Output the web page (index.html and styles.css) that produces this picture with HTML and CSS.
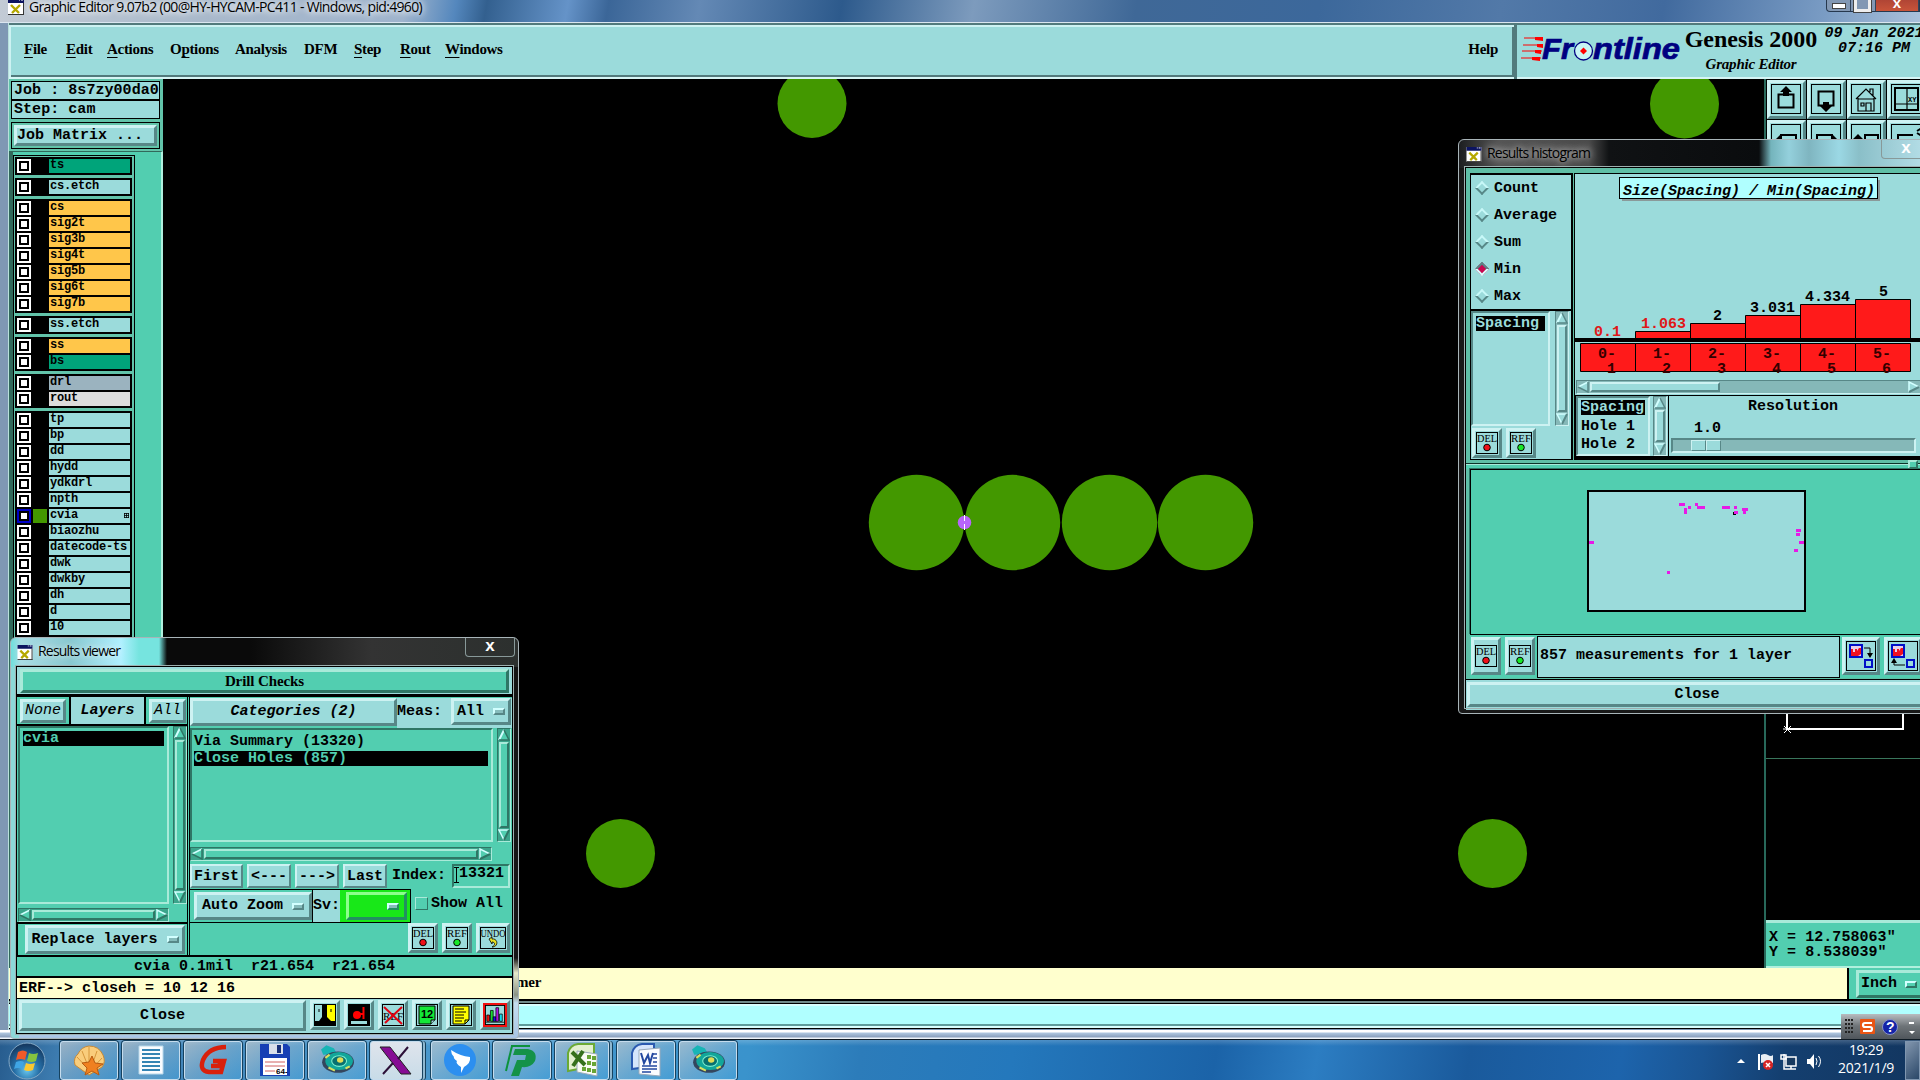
FILE: index.html
```
<!DOCTYPE html>
<html lang="en">
<head>
  <meta charset="UTF-8">
  <title>Graphic Editor 9.07b2</title>
  <link rel="stylesheet" href="styles.css">
</head>
<body>
  <svg class="defs">
    <symbol id="xicon" viewBox="0 0 16 16"><rect width="16" height="16" fill="#fff"/><rect width="16" height="4" fill="#0c1460"/><path d="M11 1h1M13 1h2" stroke="#fff"/><path d="M3 6l8 8M12 6l-8 8" stroke="#b5a800" stroke-width="2.4"/><path d="M15.500 4V16M0 15.500H16" stroke="#333"/></symbol>
    <symbol id="up" viewBox="0 0 12 12"><path d="M6 1L1 11H11Z" fill="var(--face)"/><path d="M6 1L1 11" stroke="#d2ffff" stroke-width="2"/><path d="M6 1L11 11H1" fill="none" stroke="var(--lo)" stroke-width="1.500"/></symbol>
    <symbol id="down" viewBox="0 0 12 12"><path d="M1 1H11L6 11Z" fill="var(--face)"/><path d="M11 1H1L6 11" fill="none" stroke="#d2ffff" stroke-width="1.500"/><path d="M11 1L6 11" stroke="var(--lo)" stroke-width="2"/></symbol>
    <symbol id="left" viewBox="0 0 12 12"><path d="M1 6L11 1V11Z" fill="var(--face)"/><path d="M11 1L1 6" stroke="#d2ffff" stroke-width="1.500"/><path d="M11 1V11L1 6" fill="none" stroke="var(--lo)" stroke-width="1.500"/></symbol>
    <symbol id="right" viewBox="0 0 12 12"><path d="M11 6L1 1V11Z" fill="var(--face)"/><path d="M11 6L1 1V11" fill="none" stroke="#d2ffff" stroke-width="1.500"/><path d="M1 11L11 6" stroke="var(--lo)" stroke-width="2"/></symbol>
    <symbol id="del" viewBox="0 0 22 22"><rect x=".5" y=".5" width="21" height="21" fill="none" stroke="#000"/><text x="11" y="10" class="tiny" textLength="20" lengthAdjust="spacingAndGlyphs">DEL</text><circle cx="11" cy="15.500" r="3.300" fill="#f01018" stroke="#000"/></symbol>
    <symbol id="ref" viewBox="0 0 22 22"><rect x=".5" y=".5" width="21" height="21" fill="none" stroke="#000"/><text x="11" y="10" class="tiny" textLength="20" lengthAdjust="spacingAndGlyphs">REF</text><circle cx="11" cy="15.500" r="3.300" fill="#18e828" stroke="#000"/></symbol>
    <symbol id="snail" viewBox="0 0 32 30"><path d="M1 5l5-4 7 3 3 5-13 1z" fill="#18b5b5"/><ellipse cx="17" cy="17" rx="15" ry="10" fill="#34465e"/><ellipse cx="18" cy="16" rx="13" ry="8.500" fill="#12a69a"/><ellipse cx="18" cy="16" rx="7" ry="5" fill="#087070" stroke="#80f0d0"/><ellipse cx="19" cy="15" rx="3" ry="2.500" fill="#e3dc54"/><path d="M8 22l6 3M5 13l4-3M24 23l4-2" stroke="#d8e060" stroke-width="2"/></symbol>
  </svg>

  <div class="titlebar">
    <svg class="app-icon"><use href="#xicon"/></svg>
    <span class="caption">Graphic Editor 9.07b2 (00@HY-HYCAM-PC411 - Windows, pid:4960)</span>
    <div class="win-buttons"><i class="min"></i><i class="max"></i><i class="cls">x</i></div>
  </div>

  <div class="editor">
    <header class="topbar">
      <nav class="menubar">
        <span class="m1"><u>F</u>ile</span><span class="m2"><u>E</u>dit</span><span class="m3"><u>A</u>ctions</span><span class="m4">O<u>p</u>tions</span><span class="m5">Analysis</span><span class="m6">DFM</span><span class="m7"><u>S</u>tep</span><span class="m8"><u>R</u>out</span><span class="m9"><u>W</u>indows</span>
        <span class="help">Help</span>
      </nav>
      <div class="brand">
        <svg class="logo" width="162" height="50" viewBox="0 0 162 50">
          <path d="M14 12L22 12V16L14 15ZM16 19h6v4l-6-1ZM14 25h6v4l-6-1ZM11 32h8v4l-8-1Z" fill="#f00"/>
          <path d="M3 13h18M2 20h20M1 26h20M0 33h20" stroke="#f00" stroke-width="1"/>
          <g class="logo-text"><text x="21" y="34" textLength="31" lengthAdjust="spacingAndGlyphs">Fr</text><text x="72" y="34" textLength="87" lengthAdjust="spacingAndGlyphs">ntline</text></g>
          <circle cx="62.500" cy="26" r="9" fill="#c8f4f4" stroke="#000080" stroke-width="1.300"/>
          <path d="M62.500 22.500L66 26L62.500 29.500L59 26Z" fill="#f00"/>
        </svg>
        <div class="product"><b>Genesis 2000</b><em>Graphic Editor</em></div>
        <div class="clock">09 Jan 2021<br>07:16 PM</div>
      </div>
    </header>

    <main class="work">
      <aside class="side">
        <div class="job">Job : 8s7zy00da0</div>
        <div class="job">Step: cam</div>
        <div class="matrix"><div class="btn">Job Matrix ...</div></div>
        <div class="layer-area">
          <div class="layers">
            <div class="group"><div class="row"><i></i><s></s><b class="mask">ts</b></div></div>
            <div class="group"><div class="row"><i></i><s></s><b>cs.etch</b></div></div>
            <div class="group">
              <div class="row"><i></i><s></s><b class="sig">cs</b></div>
              <div class="row"><i></i><s></s><b class="sig">sig2t</b></div>
              <div class="row"><i></i><s></s><b class="sig">sig3b</b></div>
              <div class="row"><i></i><s></s><b class="sig">sig4t</b></div>
              <div class="row"><i></i><s></s><b class="sig">sig5b</b></div>
              <div class="row"><i></i><s></s><b class="sig">sig6t</b></div>
              <div class="row"><i></i><s></s><b class="sig">sig7b</b></div>
            </div>
            <div class="group"><div class="row"><i></i><s></s><b>ss.etch</b></div></div>
            <div class="group">
              <div class="row"><i></i><s></s><b class="sig">ss</b></div>
              <div class="row"><i></i><s></s><b class="mask">bs</b></div>
            </div>
            <div class="group">
              <div class="row"><i></i><s></s><b class="drl">drl</b></div>
              <div class="row"><i></i><s></s><b class="rout">rout</b></div>
            </div>
            <div class="group">
              <div class="row"><i></i><s></s><b>tp</b></div>
              <div class="row"><i></i><s></s><b>bp</b></div>
              <div class="row"><i></i><s></s><b>dd</b></div>
              <div class="row"><i></i><s></s><b>hydd</b></div>
              <div class="row"><i></i><s></s><b>ydkdrl</b></div>
              <div class="row"><i></i><s></s><b>npth</b></div>
              <div class="row on"><i></i><s></s><b>cvia<svg width="5" height="5"><path d="M0 .5h5M0 2.500h5M0 4.500h5M.5 0v5M2.500 0v5M4.500 0v5" stroke="#000" stroke-width=".8"/></svg></b></div>
              <div class="row"><i></i><s></s><b>biaozhu</b></div>
              <div class="row"><i></i><s></s><b>datecode-ts</b></div>
              <div class="row"><i></i><s></s><b>dwk</b></div>
              <div class="row"><i></i><s></s><b>dwkby</b></div>
              <div class="row"><i></i><s></s><b>dh</b></div>
              <div class="row"><i></i><s></s><b>d</b></div>
              <div class="row"><i></i><s></s><b>10</b></div>
            </div>
          </div>
        </div>
      </aside>

      <svg class="canvas" width="1601" height="889" viewBox="163 79 1601 889">
        <g fill="#439800">
          <circle cx="812" cy="103.500" r="34.500"/><circle cx="1684.500" cy="104" r="34.500"/>
          <circle cx="620.500" cy="853.500" r="34.500"/><circle cx="1492.500" cy="853.500" r="34.500"/>
          <circle cx="916.500" cy="522.500" r="47.700"/><circle cx="1012.500" cy="522.500" r="47.700"/>
          <circle cx="1109.500" cy="522.500" r="47.700"/><circle cx="1205.500" cy="522.500" r="47.700"/>
        </g>
        <circle cx="964.500" cy="522.500" r="6.800" fill="#b864fa"/>
        <path d="M964.500 515v6M964.500 524v6" stroke="#fff"/>
      </svg>

      <aside class="right">
        <div class="tools">
          <div class="tool"><svg width="30" height="30"><rect x="7.500" y="10.500" width="15" height="13" class="t2"/><path d="M15 2l6 6h-3v4h-6v-4h-3z"/></svg></div>
          <div class="tool"><svg width="30" height="30"><rect x="7.500" y="7.500" width="15" height="14" class="t2"/><path d="M15 28l-6-6h3v-4h6v4h3z"/></svg></div>
          <div class="tool"><svg width="30" height="30"><path d="M5 15L15 5L25 15M19 8V5h3v7M7 14V27H23V14M7 15H23M15 27V19h5v8M10 19h3v3h-3z" class="t1"/></svg></div>
          <div class="tool"><svg width="30" height="30"><path d="M4 4H27V26H4Z" class="t2"/><path d="M16 4V26M4 20H27" class="t1"/><text x="17" y="18" class="xy">XY</text></svg></div>
          <div class="tool"><svg width="30" height="30"><rect x="10" y="11" width="15" height="14" class="t2"/><path d="M4 16l6-6v12z"/></svg></div>
          <div class="tool"><svg width="30" height="30"><rect x="6" y="11" width="15" height="14" class="t2"/><path d="M27 16l-6-6v12z"/></svg></div>
          <div class="tool"><svg width="30" height="30"><rect x="14" y="11" width="13" height="14" class="t2"/><path d="M2 15l5-5 5 5zM5 15h4v4h-4z"/></svg></div>
          <div class="tool"><svg width="30" height="30"><path d="M7 22V11H22M26 7l5-3M26 9l5 3" class="t2"/></svg></div>
        </div>
        <svg class="overview" width="154" height="63"><path d="M21 13V33H137V13" fill="none" stroke="#fff" stroke-width="2"/><path d="M18 30l7 7M25 30l-7 7M17 33h8" stroke="#fff"/></svg>
        <div class="xy-pos">X = 12.758063"<br>Y = 8.538039"</div>
      </aside>
    </main>

    <div class="msgbar"><span>Select layer by cursor. Click on marker. Timer</span><div class="units"><div class="btn">Inch<i class="opt"></i></div></div></div>
    <div class="cmdbar"></div>
  </div>
  <div class="frame-bottom"></div>

  <section class="window viewer">
    <div class="win-title"><svg class="app-icon"><use href="#xicon"/></svg><span>Results viewer</span><i class="close">x</i></div>
    <div class="win-body">
      <div class="drill"><div class="btn">Drill Checks</div></div>
      <div class="panes">
        <div class="pane-l">
          <div class="tabs"><div class="btn thin">None</div><em>Layers</em><div class="btn thin all">All</div></div>
          <div class="list-row">
            <div class="list"><div class="sel">cvia</div></div>
            <div class="sb v"><svg><use href="#up"/></svg><i></i><svg><use href="#down"/></svg></div>
          </div>
          <div class="sb h"><svg><use href="#left"/></svg><i></i><svg><use href="#right"/></svg></div>
          <div class="replace"><div class="btn">Replace layers<i class="opt"></i></div></div>
        </div>
        <div class="pane-r">
          <div class="cats"><div class="btn cat">Categories (2)</div><div class="meas">Meas:<div class="btn">All<i class="opt"></i></div></div></div>
          <div class="list-row">
            <div class="list"><div>Via Summary (13320)</div><div class="sel">Close Holes (857)</div></div>
            <div class="sb v"><svg><use href="#up"/></svg><i></i><svg><use href="#down"/></svg></div>
          </div>
          <div class="sb h"><svg><use href="#left"/></svg><i></i><svg><use href="#right"/></svg></div>
          <div class="nav"><div class="btn first">First</div><div class="btn">&lt;---</div><div class="btn">---&gt;</div><div class="btn">Last</div><span>Index:</span><div class="field"><svg width="5" height="16"><path d="M0 .5h5M2.500 1v14M0 15.500h5" stroke="#000"/></svg>13321</div></div>
          <div class="zoom"><div class="zoom-box"><div class="btn">Auto Zoom<i class="opt"></i></div><span>Sv:</span><div class="green"><div class="btn"><i class="opt"></i></div></div></div><i class="check"></i>Show All</div>
          <div class="acts">
            <div class="ib"><svg><use href="#del"/></svg></div><div class="ib"><svg><use href="#ref"/></svg></div>
            <div class="ib wide"><svg viewBox="0 0 26 22"><rect x=".5" y=".5" width="25" height="21" fill="none" stroke="#000"/><text x="13" y="10" class="tiny" textLength="25" lengthAdjust="spacingAndGlyphs">UNDO</text><path d="M9 12l3-2v2c6-1 7 8 0 8c4-2 3-5 0-5v2z" fill="#e8e020" stroke="#000" stroke-width=".8"/></svg></div>
          </div>
        </div>
      </div>
      <div class="measure">cvia 0.1mil&nbsp; r21.654&nbsp; r21.654</div>
      <div class="erf">ERF--&gt; closeh = 10 12 16</div>
      <div class="foot">
        <div class="btn">Close</div>
        <div class="ib"><svg viewBox="0 0 22 22"><path d="M0 0h22v22H0z"/><path d="M1 1h7v12l-3 4H1z" fill="#9cdcdc"/><path d="M13 1h8v16h-4l-4-4z" fill="#ff0"/><path d="M5 5v3M17 5v3" stroke="#000"/></svg></div>
        <div class="ib"><svg viewBox="0 0 22 22"><path d="M0 0h22v22H0z"/><path d="M3 17h16v3H3z" fill="#9cdcdc"/><circle cx="9" cy="11" r="4" fill="#f00"/><path d="M15.500 3v12M11 10h5" stroke="#f00" stroke-width="2"/></svg></div>
        <div class="ib"><svg viewBox="0 0 22 22"><rect x=".5" y=".5" width="21" height="21" fill="none" stroke="#000"/><text x="11" y="16" class="tiny">REF</text><path d="M2 3L20 20M20 3L3 19" stroke="#e00010" stroke-width="2"/></svg></div>
        <div class="ib"><svg viewBox="0 0 22 22"><rect x=".5" y=".5" width="21" height="21" fill="none" stroke="#000"/><path d="M3 2H19V16L15 20H3Z" fill="#14e838" stroke="#000"/><path d="M19 16h-4v4" fill="#9cdcdc" stroke="#000"/><text x="11" y="14" class="tiny num">12</text></svg></div>
        <div class="ib"><svg viewBox="0 0 22 22"><rect x=".5" y=".5" width="21" height="21" fill="none" stroke="#000"/><path d="M3 2H19V16L15 20H3Z" fill="#ff0" stroke="#000"/><path d="M5 5h9M5 8h11M5 11h9M5 14h9M5 17h7M19 16h-4v4" fill="none" stroke="#000"/></svg></div>
        <div class="ib hot"><svg viewBox="0 0 22 22"><rect x=".5" y=".5" width="21" height="21" fill="none" stroke="#000"/><g stroke="#000" stroke-width=".8"><path d="M2 11h3v7H2z" fill="#f01010"/><path d="M6 6h3v12H6z" fill="#18d830"/><path d="M9 13h3v5H9z" fill="#1010f0"/><path d="M12 3h3v15h-3z" fill="#b010e0"/><path d="M16 10h3v8h-3z" fill="#10e0f0"/><path d="M1 19h20"/></g></svg></div>
      </div>
    </div>
  </section>

  <section class="window histogram">
    <div class="win-title"><svg class="app-icon"><use href="#xicon"/></svg><span>Results histogram</span><i class="close">x</i></div>
    <div class="win-body">
      <div class="hist-top">
        <div class="hist-l">
          <div class="radios">
            <div><i></i>Count</div><div><i></i>Average</div><div><i></i>Sum</div><div><i class="on"></i>Min</div><div><i></i>Max</div>
          </div>
          <div class="cols">
            <div class="list-row">
              <div class="list"><div class="sel">Spacing</div></div>
              <div class="sb v"><svg><use href="#up"/></svg><i></i><svg><use href="#down"/></svg></div>
            </div>
            <div class="acts"><div class="ib"><svg><use href="#del"/></svg></div><div class="ib"><svg><use href="#ref"/></svg></div></div>
          </div>
        </div>
        <div class="hist-r">
          <svg class="chart" width="350" height="206" viewBox="1574 173 350 206">
            <rect x="1622" y="180" width="258" height="21" fill="#8a9a9a"/>
            <rect x="1619.500" y="177.500" width="258" height="21" fill="#b0ffff" stroke="#000"/>
            <text x="1623" y="195" class="it">Size(Spacing) / Min(Spacing)</text>
            <g fill="#ff1a1a" stroke="#000">
              <path d="M1635.500 331.500h55v8h-55zM1690.500 323.500h55v16h-55zM1745.500 315.500h55v24h-55zM1800.500 304.500h55v35h-55zM1855.500 299.500h55v40h-55z"/>
              <path d="M1580.500 343.500h55v28h-55zM1635.500 343.500h55v28h-55zM1690.500 343.500h55v28h-55zM1745.500 343.500h55v28h-55zM1800.500 343.500h55v28h-55zM1855.500 343.500h55v28h-55z"/>
            </g>
            <path d="M1574 340H1924" stroke="#000" stroke-width="4"/>
            <g class="low"><text x="1594" y="336">0.1</text><text x="1641" y="328">1.063</text></g>
            <text x="1713" y="320">2</text><text x="1750" y="312">3.031</text><text x="1805" y="301">4.334</text><text x="1879" y="296">5</text>
            <g class="bins">
              <text x="1598" y="358">0-</text><text x="1607" y="373">1</text>
              <text x="1653" y="358">1-</text><text x="1662" y="373">2</text>
              <text x="1708" y="358">2-</text><text x="1717" y="373">3</text>
              <text x="1763" y="358">3-</text><text x="1772" y="373">4</text>
              <text x="1818" y="358">4-</text><text x="1827" y="373">5</text>
              <text x="1873" y="358">5-</text><text x="1882" y="373">6</text>
            </g>
          </svg>
          <div class="sb h"><svg><use href="#left"/></svg><i></i><svg class="end"><use href="#right"/></svg></div>
          <div class="hist-low">
            <div class="list"><div class="sel">Spacing</div><div>Hole 1</div><div>Hole 2</div></div>
            <div class="sb v"><svg><use href="#up"/></svg><i></i><svg><use href="#down"/></svg></div>
            <div class="res"><b>Resolution</b><span>1.0</span><div class="slider"><i></i><i></i></div></div>
          </div>
        </div>
      </div>
      <div class="sash"><i></i></div>
      <div class="map">
        <svg width="219" height="122" viewBox="1587 490 219 122">
          <rect x="1588" y="491" width="217" height="120" fill="#9bdbdb" stroke="#000" stroke-width="2"/>
          <path fill="#e61ae6" d="M1679 503h6v3h-6zM1688 506h3v3h-3zM1684 508h3v6h-3zM1695 503h3v3h-3zM1697 506h8v3h-8zM1722 506h8v3h-8zM1734 506h3v3h-3zM1734 511h4v3h-4zM1742 508h6v3h-6zM1743 510h3v4h-3zM1796 529h5v3h-5zM1796 533h4v3h-4zM1799 541h5v3h-5zM1794 549h4v3h-4zM1589 541h5v3h-5zM1667 571h3v3h-3z"/>
          <path d="M1733 512v3h3v-1h-2v-2z"/>
        </svg>
      </div>
      <div class="count-row">
        <div class="ib tall"><svg><use href="#del"/></svg></div><div class="ib tall"><svg><use href="#ref"/></svg></div>
        <div class="count">857 measurements for 1 layer</div>
        <div class="ib big"><svg width="30" height="30"><rect x=".5" y=".5" width="29" height="29" fill="none" stroke="#000"/><path d="M4 4h12v12H4z" fill="#e8d0e8" stroke="#0010c8" stroke-width="2"/><path d="M5 15V8h2v3h2V8h2v2l2-3h2v6l-3 2z" fill="#f01020"/><path d="M18 7h6v8" fill="none" stroke="#000"/><path d="M21 12h6l-3 5z"/><path d="M19 19h7v7h-7z" fill="none" stroke="#0010c8" stroke-width="2"/></svg></div>
        <div class="ib big"><svg width="30" height="30"><rect x=".5" y=".5" width="29" height="29" fill="none" stroke="#000"/><path d="M4 4h12v12H4z" fill="#e8d0e8" stroke="#0010c8" stroke-width="2"/><path d="M5 15V8h2v3h2V8h2v2l2-3h2v6l-3 2z" fill="#f01020"/><path d="M17 24H6v-4" fill="none" stroke="#000"/><path d="M3 22h6l-3-5z"/><path d="M19 19h7v7h-7z" fill="none" stroke="#0010c8" stroke-width="2"/></svg></div>
      </div>
      <div class="hist-close"><div class="btn">Close</div></div>
    </div>
  </section>

  <div class="ime">
    <svg width="79" height="24"><g fill="#222"><path d="M4 5h2v2H4zM7 5h2v2H7zM10 5h2v2h-2zM4 9h2v2H4zM7 9h2v2H7zM10 9h2v2h-2zM4 13h2v2H4zM7 13h2v2H7zM10 13h2v2h-2zM4 17h2v2H4zM7 17h2v2H7zM10 17h2v2h-2z"/></g><rect x="19" y="5" width="15" height="15" rx="1" fill="#ea5514"/><path d="M31 9H24q-2 0-2 2t2 2h5q2 0 2 2t-2 2H22" fill="none" stroke="#fff" stroke-width="2.200"/><circle cx="49" cy="13" r="7.500" fill="#1424a8" stroke="#8a94c8"/><text x="45" y="18" class="q">?</text><path d="M68 8h5v2h-5zM68 17h6l-3 3z" fill="#fff"/></svg>
  </div>

  <footer class="taskbar">
    <svg class="orb" width="54" height="40"><defs><radialGradient id="og" cx=".5" cy=".75" r=".7"><stop offset="0" stop-color="#69c8f0"/><stop offset=".5" stop-color="#256da5"/><stop offset="1" stop-color="#153a62"/></radialGradient></defs><circle cx="27" cy="20" r="18" fill="url(#og)" stroke="#84a9c6"/><path d="M18 11q5-3 9 0l-2 8q-4-2-9 0z" fill="#f05a28"/><path d="M29 12q4 2 9 0l-2 8q-4 2-9 0z" fill="#86c440"/><path d="M16 21q5-2 8 0l-2 7q-4-2-8 0z" fill="#3fa5e5"/><path d="M26 22q4 2 9 0l-2 7q-5 2-9 0z" fill="#fcc830"/></svg>
    <div class="task"><svg width="34" height="34"><path d="M3 22Q1 15 6 11Q9 4 17 3Q27 3 31 12Q34 19 30 24L17 32Z" fill="#f9cd7c" stroke="#c98a35"/><path d="M10 8l8 20M17 4v24M25 8l-7 20M5 14l13 14M30 15L18 28" stroke="#d6973c"/><path d="M20 13l3 7 8 1-6 4 2 7-7-4-7 4 2-7-5-5 7-1z" fill="#f08020" stroke="#b85a10"/></svg></div>
    <div class="task"><svg width="34" height="34"><path d="M5 3H29V31H5Z" fill="#fafcff" stroke="#b8d8ea"/><path d="M8 7H26M8 11H26M8 15H26M8 19H26M8 23H26M8 27H26" stroke="#3484b4" stroke-width="2"/></svg></div>
    <div class="task"><svg width="34" height="34"><path d="M30 4Q13 4 7 17Q3 28 13 29H25L28 18H17M15 23H23L25 18" fill="none" stroke="#d8200c" stroke-width="4.500"/></svg></div>
    <div class="task"><svg width="34" height="34"><path d="M2 1H29L32 4V33H2Z" fill="#1640b4"/><path d="M11 1h14v10H11z" fill="#d8e0ea"/><path d="M19 2h4v8h-4z" fill="#173078"/><path d="M5 15H29V32H5Z" fill="#fff"/><path d="M7 19H27M7 23H27M7 28H17" stroke="#d06060"/><text x="18" y="31" class="n64">64-</text></svg></div>
    <div class="task"><svg width="34" height="32"><use href="#snail"/></svg></div>
    <div class="task active stack"><svg width="34" height="34"><path d="M1 4H11L32 31H22Z" fill="#860c94" stroke="#222"/><path d="M29 4L19 16M14 20L4 31" stroke="#2c1038" stroke-width="2"/></svg></div>
    <div class="task"><svg width="34" height="34"><circle cx="17" cy="17" r="16" fill="#2c8ff0"/><path d="M8 7Q17 13 27 14Q28 20 21 24L18 30L18 24Q12 20 14 18Q10 15 11 14Q8 11 8 7Z" fill="#fff"/></svg></div>
    <div class="task"><svg width="34" height="34"><path d="M6 3H25" stroke="#0c923c" stroke-width="2"/><path d="M7 3L1 28" stroke="#0c923c" stroke-width="2"/><path d="M10 6H23Q33 8 30 18Q26 25 17 24L14 33H6L12 17H20L21 12H8Z" fill="#149248"/></svg></div>
    <div class="task stack xl"><svg width="34" height="34"><path d="M3 28V10Q5 2 13 1H29V23Z" fill="#e2f0cf" stroke="#6aaa35" stroke-width="2"/><path d="M12 8L32 11V33L12 29Z" fill="#f8fbf4" stroke="#9ab"/><path d="M22 12h4v4h-4zM27 13h4v4h-4zM22 18h4v4h-4zM27 19h4v4h-4zM17 24h4v4h-4zM22 25h4v4h-4zM27 26h4v4h-4z" fill="#68a535"/><path d="M7 9L20 22M18 8L8 23" stroke="#35701c" stroke-width="4"/></svg></div>
    <div class="task"><svg width="34" height="34"><path d="M3 26V10Q5 2 13 1H25V23Z" fill="#d5e5fb" stroke="#2b5ab0" stroke-width="2"/><path d="M10 7L31 5V33L10 31Z" fill="#fbfcff" stroke="#9ab"/><path d="M12 10l3 10 4-8 2 8 3-10" fill="none" stroke="#2448a0" stroke-width="2"/><path d="M24 11H28M24 15H28M24 19H28M13 23H28M13 26H28M13 29H22" stroke="#2448a0" stroke-width="1.600"/></svg></div>
    <div class="task"><svg width="34" height="32"><use href="#snail"/></svg></div>
    <div class="tray">
      <svg width="90" height="30"><path d="M1 17l4-4 4 4z" fill="#fff"/><path d="M23 8V24" stroke="#fff" stroke-width="2"/><path d="M25 9Q29 7 32 9T37 9V17Q33 18 30 17T25 17Z" fill="#e8eef4"/><circle cx="32" cy="19" r="5" fill="#d52525"/><path d="M30 17l4 4M34 17l-4 4" stroke="#fff" stroke-width="1.500"/><path d="M50 11H60V20H50Z" fill="#183a60" stroke="#fff" stroke-width="1.500"/><path d="M50 23H60M55 20v3M48 8v5M45 9h5v4h-5zM48 13V23H52" fill="none" stroke="#fff" stroke-width="1.500"/><path d="M71 13h3l4-5v15l-4-5h-3z" fill="#fff"/><path d="M80 12q2 3 0 7M82.500 10q4 5 0 11" stroke="#fff" fill="none"/></svg>
      <div class="time">19:29<br>2021/1/9</div>
      <i class="peek"></i>
    </div>
  </footer>
</body>
</html>
```
FILE: styles.css
```
* { box-sizing: border-box; }
:root {
  --face: #9bdbdb;
  --hi: #cdf2f2;
  --lo: #578787;
}
body {
  margin: 0;
  width: 1920px;
  height: 1080px;
  overflow: hidden;
  position: relative;
  background: #7f98b4;
  font: bold 15px/18px "Liberation Mono", monospace;
  color: #000;
}
i { font-style: normal; }
svg { display: block; flex: none; overflow: visible; }
.defs { position: absolute; width: 0; height: 0; }
svg text { font-weight: bold; font-size: 15px; }
svg .tiny { font: 11px "Liberation Serif", serif; text-anchor: middle; }
svg .num { font: bold 11px "Liberation Sans", sans-serif; }
svg .it { font-style: italic; }
svg .n64 { font: bold 8px "Liberation Sans", sans-serif; }
.app-icon { width: 16px; height: 16px; }

.btn {
  background: var(--face);
  border: 3px solid;
  border-color: var(--hi) var(--lo) var(--lo) var(--hi);
  display: flex;
  align-items: center;
  justify-content: center;
  white-space: pre;
}
.opt {
  width: 12px;
  height: 7px;
  border: 2px solid;
  border-color: #d2ffff var(--lo) var(--lo) #d2ffff;
  background: #86bcbc;
}
.ib {
  width: 30px;
  height: 30px;
  flex: none;
  border: 3px solid;
  border-color: var(--hi) var(--lo) var(--lo) var(--hi);
  background: var(--face);
  display: flex;
  align-items: center;
  justify-content: center;
}
.ib svg { width: 22px; height: 22px; }

/* main window */
.titlebar {
  height: 23px;
  display: flex;
  padding-left: 8px;
  border-bottom: 1px solid #dbe6f0;
  background: linear-gradient(100deg, #c3cbd5 0, #a9b9cb 200px, #9fb4cd 400px, #5487bd 450px, #33608f 480px, #6593c8 560px, #3b6698 600px, #6489b5 690px, #2d5a8c 830px, #7d9bbd 960px, #3f6897 1120px, #3c689b 1300px, #5279a8 1480px, #416a9e 1640px, #7a9cc4 1800px, #b7cbe0 1920px);
}
.titlebar .app-icon { margin-top: -1px; }
.caption {
  font: 14px/13px "Open Sans", sans-serif;
  letter-spacing: -0.67px;
  margin-left: 5px;
  height: 13px;
  white-space: nowrap;
  text-shadow: 0 0 6px #fff, 0 0 8px #fff;
}
.win-buttons {
  display: flex;
  margin-left: auto;
  width: 94px;
  height: 12px;
  border: 1px solid #26384e;
  border-top: 0;
  border-radius: 0 0 0 4px;
  background: #8298b4;
}
.win-buttons i { width: 28px; border-right: 1px solid #31445c; display: flex; justify-content: center; }
.win-buttons .min::before { content: ""; width: 12px; height: 4px; background: #fff; border: 1px solid #444; margin-top: 3px; }
.win-buttons .max::before { content: ""; width: 11px; height: 10px; border: 3px solid #eee; outline: 1px solid #444; margin-top: -4px; }
.win-buttons .cls { width: 50px; background: linear-gradient(#b04535, #c8543a); color: #fff; font: bold 15px/5px "Liberation Sans", sans-serif; }

.editor { margin-left: 8px; height: 1007px; border-left: 1px solid #b8e0dc; }
.topbar { display: flex; height: 56px; background: #527a7c; }
.menubar {
  width: 1505px;
  height: 56px;
  border-top: 2px solid #527a7c;
  border-bottom: 2px solid #d6f5f5;
  box-shadow: inset 2px 2px var(--hi), inset -2px -2px #527a7c;
  background: #9bdbdb;
  display: flex;
  padding: 15px 16px 0 15px;
  font: bold 15px/18px "Liberation Serif", serif;
}
.menubar span { white-space: nowrap; letter-spacing: -0.3px; }
.menubar u { text-decoration-thickness: 1px; text-underline-offset: 3px; }
.m1 { width: 42px; } .m2 { width: 41px; } .m3 { width: 63px; } .m4 { width: 65px; } .m5 { width: 69px; }
.m6 { width: 50px; } .m7 { width: 46px; } .m8 { width: 45px; } .m9 { width: 60px; }
.help { margin-left: auto; }
.brand {
  flex: 1;
  margin: 2px 0 0 3px;
  background: #9bdbdb;
  border-bottom: 2px solid #d6f5f5;
  display: flex;
}
.logo { margin-left: 4px; }
.logo-text { font-family: "Liberation Sans", sans-serif; font-style: italic; }
.logo-text text { font-size: 29px; fill: #000080; stroke: #000080; stroke-width: .7px; }
.product { width: 136px; display: flex; flex-direction: column; align-items: center; font: bold 24px/28px "Liberation Serif", serif; white-space: nowrap; }
.product em { font: italic bold 15px/22px "Liberation Serif", serif; letter-spacing: -0.2px; }
.clock { margin: 1px -8px 0 3px; width: 104px; font-style: italic; line-height: 15px; text-align: center; white-space: nowrap; }
.work { display: flex; height: 889px; background: #000; }
.side { width: 154px; padding: 2px 3px 0 2px; background: #62c4aa; display: flex; flex-direction: column; }
.job { height: 19px; border: 1px solid #000; background: #9bdbdb; padding-left: 2px; line-height: 17px; white-space: pre; overflow: hidden; letter-spacing: .05px; }
.matrix { margin: 3px 0 2px; height: 27px; border: 1px solid #000; padding: 2px; }
.matrix .btn { height: 21px; justify-content: flex-start; }
.layer-area { flex: 1; margin: 0 -3px 0 -2px; padding: 3px 0 0 4px; border-top: 1px solid #31695b; background: linear-gradient(90deg, #31695b 4px, #52ceb0 4px); border-right: 2px solid #b0f0de; }
.layers { width: 122px; height: 100%; border: 1px solid #000; background: #62c4aa; padding: 1px; display: flex; flex-direction: column; gap: 3px; }
.group { background: #000; padding: 2px; width: 117px; display: flex; flex-direction: column; gap: 2px; }
.row { display: flex; gap: 2px; height: 14px; }
.row i { width: 14px; border: 2px solid #fff; background: #fff; box-shadow: inset 0 0 0 2px #000; }
.row s { width: 14px; }
.row b { width: 81px; background: #9bdbdb; font-size: 12px; line-height: 13px; letter-spacing: -0.2px; padding: 0 0 1px 1px; display: flex; align-items: center; justify-content: space-between; }
.row b svg { margin-right: 1px; }
.row .mask { background: #00a47a; }
.row .sig { background: #ffc64a; }
.row .drl { background: #9bb3bf; }
.row .rout { background: #dcdcdc; }
.row.on i { border-color: #0000c8; }
.row.on s { background: #439800; }
.canvas { overflow: hidden; }
.right { width: 156px; border-left: 2px solid #27685a; display: flex; flex-direction: column; }
.tools { display: flex; flex-wrap: wrap; width: 170px; gap: 1px; height: 624px; align-content: flex-start; padding: 1px 0 0 1px; }
.tool { width: 39px; height: 39px; border: 3px solid; border-color: var(--hi) var(--lo) var(--lo) var(--hi); background: #9bdbdb; padding: 1px; }
.tool svg { outline: 1px solid #000; outline-offset: -1px; }
.tool .t2 { fill: none; stroke: #000; stroke-width: 2; }
.tool .t1 { fill: none; stroke: #000; stroke-width: 1.2; }
.tool .xy { font-size: 7px; }
.overview { border-bottom: 1px solid #39765c; margin-top: -7px; }
.xy-pos { margin-top: auto; height: 48px; padding: 7px 0 0 3px; line-height: 15px; background: #52ceb0; border-top: 3px solid #a9ead9; border-bottom: 2px solid #b0f0de; white-space: nowrap; letter-spacing: .05px; }
.msgbar { height: 31px; background: #ffffce; display: flex; font: bold 15px/18px "Liberation Serif", serif; }
.msgbar span { width: 532px; text-align: right; padding-top: 5px; letter-spacing: -.3px; }
.units { margin-left: auto; width: 73px; padding: 2px 0 0 7px; background: #52ceb0; border-left: 2px solid #000; font: bold 15px/18px "Liberation Mono", monospace; }
.units .btn { --hi: #a9ead9; --lo: #2f7665; background: #52ceb0; height: 28px; width: 72px; justify-content: flex-start; gap: 8px; padding-left: 2px; }
.units .opt { background: #52ceb0; }
.cmdbar { height: 30px; border-top: 2px solid #000; background: linear-gradient(#708a8a 2px, #000 2px 3px, #d8ffff 3px 5px, #b0ffff 5px 23px, #5e9c9c 23px 25px, #d8ffff 25px 27px, #000 27px); }
.frame-bottom { height: 9px; background: linear-gradient(#fff 2px, #afc7e0 3px, #8aa0bd 7px, #eef4fa 8px); }

/* floating windows */
.window { position: absolute; border: 1px solid #a8b4b8; border-radius: 6px 6px 4px 4px; }
.win-title { display: flex; height: 28px; padding-left: 1px; font: 14px/18px "Open Sans", sans-serif; letter-spacing: -0.8px; }
.win-title .app-icon { margin: 7px 5px 0 0; height: 15px; }
.win-title span { padding-top: 4px; white-space: nowrap; text-shadow: 0 0 7px #fffa, 0 0 10px #fff8; }
.win-title .close { margin-left: auto; margin-right: -2px; width: 50px; height: 19px; border: 1px solid #899; border-top: 0; border-radius: 0 0 4px 4px; color: #fff; text-align: center; font: bold 17px/15px "Liberation Sans", sans-serif; letter-spacing: 0; }
.win-body { border: 1px solid #000; outline: 1px solid #9eb0b0; }
.viewer {
  left: 10px;
  top: 637px;
  width: 509px;
  height: 402px;
  padding: 0 5px;
  background: linear-gradient(90deg, #6ee0dc 0, #a9dce4 10px, #88c8d0 60px, #b0f0ff 110px, #76e4df 128px, #76e4df 148px, #0a0a0a 156px, #0a0a0a 240px, #333 360px, #2c302e) 0 0/100% 29px no-repeat,
    linear-gradient(90deg, #8cd8d8 8px, transparent 8px) 0 29px no-repeat,
    linear-gradient(#151515 320px, #e8eccc 335px, #8a9284 357px, #c4def0 365px, #a8c4e4);
}
.viewer .win-body { height: 368px; background: #52ceb0; margin-bottom: 5px; }
.drill { height: 30px; padding: 2px 3px 2px; background: #9bdbdb; border-bottom: 3px solid #000; }
.drill .btn, .sb, .list, .field, .check { --face: #52ceb0; --hi: #a9ead9; --lo: #2f7665; }
.drill .btn { height: 24px; font: bold 15px/18px "Liberation Serif", serif; letter-spacing: -.1px; }
.panes { display: flex; height: 258px; gap: 1px; }
.pane-l { width: 171px; border-right: 1px solid #000; }
.tabs { height: 29px; display: flex; gap: 3px; border-bottom: 2px solid #000; padding: 2px 1px 2px 3px; }
.tabs .btn { height: 24px; width: 46px; flex: none; }
.tabs .thin { font-style: italic; font-weight: normal; }
.tabs em { width: 78px; background: #9bdbdb; border: solid #000; border-width: 0 2px; margin: -2px 0; line-height: 27px; text-align: center; }
.tabs .all { width: 37px; }
.list-row { display: flex; gap: 4px; }
.list { flex: 1; border: 2px solid; border-color: var(--lo) var(--hi) var(--hi) var(--lo); padding: 3px; white-space: pre; line-height: 18px; overflow: hidden; }
.sel { background: #000; color: var(--face); height: 15px; line-height: 15px; margin-bottom: 3px; }
.pane-l .list-row { height: 178px; padding-left: 1px; }
.sb { background: #3ba48b; border: 1px solid; border-color: var(--lo) var(--hi) var(--hi) var(--lo); display: flex; }
.sb svg { width: 12px; height: 12px; }
.sb i { flex: 1; background: var(--face); border: 2px solid; border-color: var(--hi) var(--lo) var(--lo) var(--hi); margin: 1px; }
.v { width: 14px; flex-direction: column; }
.h { height: 14px; }
.pane-l .h { margin: 4px 18px 0 1px; }
.replace { height: 33px; border: solid #000; border-width: 2px 0 0 1px; padding: 1px 2px 0 7px; }
.replace .btn { height: 29px; gap: 9px; }
.pane-r { width: 323px; border-left: 1px solid #000; }
.cats { display: flex; height: 31px; padding-top: 1px; }
.cat { width: 207px; height: 28px; font-style: italic; }
.meas { flex: 1; display: flex; background: #9bdbdb; line-height: 28px; justify-content: space-between; padding-right: 1px; }
.meas .btn { width: 60px; height: 27px; gap: 9px; }
.pane-r .list-row { height: 114px; padding: 0 1px 0 0; }
.pane-r .list-row > .list { padding: 3px 3px 3px 2px; }
.pane-r .h { margin: 5px 20px 3px 0; }
.nav { display: flex; gap: 4px; height: 25px; line-height: 23px; }
.nav .btn { width: 44px; height: 24px; border-width: 2px; }
.nav .first { width: 53px; }
.nav span { padding-left: 1px; }
.field { margin-left: 2px; width: 58px; height: 24px; border: 2px solid; border-color: var(--lo) var(--hi) var(--hi) var(--lo); display: flex; line-height: 16px; }
.nav .field svg { margin: 1px 0; }
.zoom { display: flex; height: 34px; line-height: 30px; }
.zoom-box { display: flex; width: 221px; border: 1px solid #000; border-left: 0; padding-left: 4px; margin-right: 2px; line-height: 32px; }
.zoom-box .btn { width: 118px; height: 28px; gap: 9px; margin: 2px 0; }
.zoom-box span { width: 28px; border-left: 1px solid #000; background: #9bdbdb; }
.green { flex: 1; background: #18e818; padding-left: 6px; }
.green .btn { --hi: #8cff8c; --lo: #229060; width: 61px; background: #18e818; justify-content: flex-end; padding-right: 5px; }
.check { width: 13px; height: 13px; border: 1px solid; border-color: var(--hi) var(--lo) var(--lo) var(--hi); margin: 8px 3px 0 2px; }
.acts { display: flex; gap: 4px; }
.pane-r .acts { justify-content: flex-end; padding: 0 2px 0 0; }
.ib.wide { width: 34px; }
.ib.wide svg { width: 26px; }
.measure { height: 23px; border: solid #000; border-width: 2px 0; text-align: center; line-height: 20px; }
.erf { height: 21px; background: #ffffce; border-bottom: 1px solid #000; line-height: 21px; padding-left: 2px; }
.foot { display: flex; gap: 4px; background: #9bdbdb; height: 34px; padding: 1px 2px; }
.foot .btn { flex: 1; height: 31px; }
.ib.hot { box-shadow: inset 0 0 0 2px #f01010; }
.ib.hot svg { width: 20px; }

.histogram {
  left: 1458px;
  top: 139px;
  width: 470px;
  height: 575px;
  padding-left: 6px;
  overflow: hidden;
  background: linear-gradient(90deg, #1c1e20, #555 40px, #4a4a4a 130px, #101214 150px, #0a0c0e 300px, #74b4bc 312px, #94d0dc 330px, #7fb5c0 350px, #9bd8e4 380px, #8abfc8 400px, #b6dfe8) 0 0/100% 28px no-repeat, #181818;
}
.histogram .win-title { height: 27px; }
.histogram .close { margin-right: -4px; }
.histogram .win-body { height: 541px; background: #5fbfa6; padding: 5px 0 0 4px; }
.hist-top { display: flex; height: 287px; gap: 2px; }
.hist-l { width: 103px; border: 2px solid #000; border-width: 2px 2px 1px 1px; background: #9bdbdb; }
.hist-l .list, .hist-l .sb, .hist-r .list, .hist-r .sb { --face: #9bdbdb; --hi: #cdf2f2; --lo: #578787; background-color: #9bdbdb; }
.hist-l .sb, .hist-r .sb { background-color: #85b8b8; }
.radios { height: 136px; border-bottom: 2px solid #000; }
.radios div { display: flex; height: 27px; line-height: 27px; }
.radios i { width: 10px; height: 10px; margin: 8px 7px 0 6px; transform: rotate(45deg); border: 2px solid; border-color: #c8f8f8 #578787 #578787 #c8f8f8; }
.radios i.on { background: #c80850; border-color: #578787 #d8ffff #d8ffff #578787; }
.cols .list-row { height: 115px; gap: 5px; padding-right: 2px; }
.cols .acts { padding: 2px 1px; }
.hist-r { width: 350px; background: #9bdbdb; border: 1px solid #000; border-right: 0; margin-left: -1px; }
.chart { margin: -1px 0 0 -1px; overflow: hidden; }
.low { fill: #e01818; }
.bins { fill: #300; }
.hist-r .h { margin: 1px 4px 1px 1px; width: 345px; }
.hist-r .h i { flex: none; width: 130px; }
.hist-r .h .end { margin-left: auto; }
.hist-low { display: flex; border: solid #000; border-width: 1px 0 3px 1px; height: 64px; }
.hist-low .list { flex: none; width: 74px; margin-right: 3px; padding-top: 2px; }
.hist-low .sel { width: 64px; }
.res { flex: 1; border-left: 1px solid #000; margin-left: 1px; padding-left: 2px; display: flex; flex-direction: column; }
.res b { padding: 2px 0 0 77px; height: 22px; }
.res span { padding-left: 23px; height: 20px; line-height: 22px; }
.slider { width: 245px; height: 15px; border: 2px solid; border-color: #578787 #cdf2f2 #cdf2f2 #578787; background: #85b8b8; display: flex; padding-left: 18px; }
.slider i { width: 15px; background: #9bdbdb; border: 1px solid; border-color: #cdf2f2 #578787 #578787 #cdf2f2; }
.sash { height: 9px; margin: 0 0 0 -4px; background: linear-gradient(#5fbfa6 3px, #0c3328 3px 4px, #a9ead9 4px 5px, #52ceb0 5px); }
.sash i { display: block; margin-left: 442px; width: 10px; height: 9px; background: #52ceb0; border: 2px solid; border-color: #a9ead9 #2f7665 #2f7665 #a9ead9; }
.map { height: 166px; border: solid #000; border-width: 1px 0 1px 1px; background: #52ceb0; padding: 20px 0 0 116px; box-shadow: -1px -1px #2f7665, 0 1px #a9ead9; }
.count-row { display: flex; gap: 4px; height: 43px; padding: 2px 0 0 1px; background: #52ceb0; }
.ib.tall { height: 38px; }
.count { width: 303px; height: 42px; margin: -1px -2px 0; border: 1px solid #000; background: #9bdbdb; line-height: 38px; padding-left: 2px; }
.ib.big { width: 38px; height: 38px; }
.ib.big svg { width: 30px; height: 30px; }
.hist-close { margin: 1px 0 0 -4px; border-top: 1px solid #000; background: #9bdbdb; padding: 2px 0 3px 1px; }
.hist-close .btn { height: 25px; padding-right: 4px; width: 464px; }

/* taskbar */
.ime { position: absolute; left: 1841px; top: 1014px; width: 79px; height: 25px; background: linear-gradient(#b8bcc0, #6e7478 12px, #50565c); }
.ime .q { font: bold 14px "Liberation Sans", sans-serif; fill: #fff; }
.taskbar {
  height: 41px;
  padding-top: 1px;
  border-top: 1px solid #0e1a24;
  display: flex;
  background: linear-gradient(#fff3, #0000 6px), linear-gradient(100deg, #275c8e 0, #3d7cb0 60px, #4a98cc 400px, #3a93cc 740px, #2c7cba 850px, #2478bc 1000px, #1b63a8 1200px, #2c7dc2 1300px, #1a5a9c 1450px, #1d64ac 1600px, #1a5594 1680px, #143f70 1760px, #12345c 1920px);
}
.taskbar .orb { margin-right: 6px; }
.task {
  width: 58px;
  height: 39px;
  margin-right: 4px;
  padding-bottom: 2px;
  flex: none;
  display: flex;
  align-items: center;
  justify-content: center;
  border: 1px solid #c5dced;
  border-radius: 3px;
  box-shadow: 0 0 0 1px #16425f;
  background: linear-gradient(145deg, #c5ccd0aa, #8cb8d488 50%, #48a4dc88);
}
.active { background: linear-gradient(#dfe4ec, #c8dce8); width: 52px; }
.stack { box-shadow: 0 0 0 1px #16425f, 3px 0 0 #8fb8d0, 4px 0 0 #16425f; margin-right: 9px; }
.xl { width: 54px; margin-right: 8px; }
.tray { margin-left: auto; display: flex; color: #fff; }
.tray svg { margin: 5px 0 0; }
.time { width: 80px; font: 14px/18px "Open Sans", sans-serif; letter-spacing: -.3px; text-align: center; }
.peek { width: 15px; margin-left: -1px; border: 1px solid #7f96b0; background: linear-gradient(135deg, #8296ae, #2a4768); }
```
